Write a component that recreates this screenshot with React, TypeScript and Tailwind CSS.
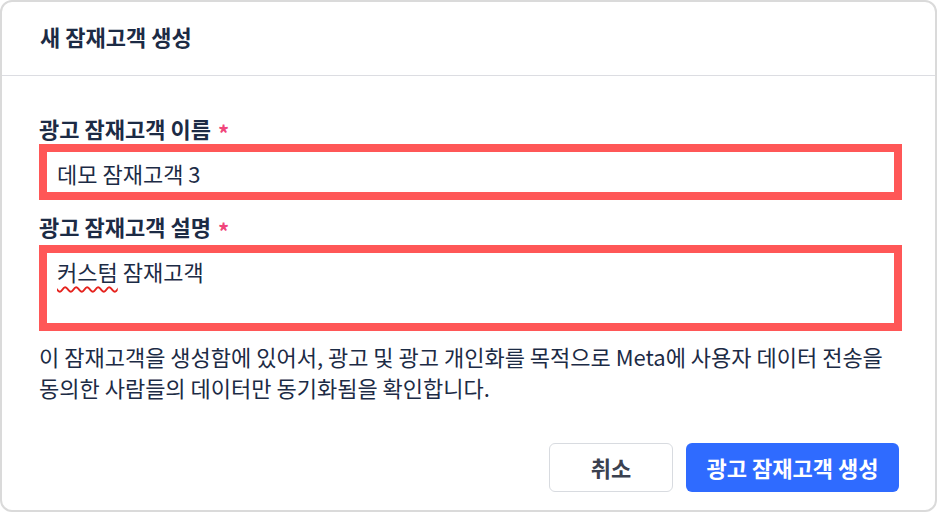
export default function App() {
  return (
    <div className="w-[938px] h-[513px] bg-white font-['Noto_Sans_CJK_KR','Noto_Sans',sans-serif] text-[#1c2b45]">
      <div className="h-[512px] w-[937px] border-2 border-[#dadada] rounded-[12px] flex flex-col">
        {/* header */}
        <div className="h-[74px] shrink-0 flex items-center px-[38px] pb-[6px] border-b border-[#dcdde2]">
          <h1 className="text-[22px] font-bold leading-none">새 잠재고객 생성</h1>
        </div>

        {/* body */}
        <div className="flex flex-col pl-[37px] pr-[33px] pt-[39px]">
          <label className="h-[26px] text-[22px] font-bold leading-[26px] flex gap-[7px]">
            광고 잠재고객 이름
            <span className="text-[#f0457a] relative top-[4px]">*</span>
          </label>
          <div className="mt-[3px] h-[56px] border-[8px] border-[#ff5757] flex items-center px-[10px]">
            <span className="text-[22px] leading-none pt-[1px]">데모 잠재고객 3</span>
          </div>

          <label className="mt-[13px] h-[26px] text-[22px] font-bold leading-[26px] flex gap-[7px]">
            광고 잠재고객 설명
            <span className="text-[#f0457a] relative top-[4px]">*</span>
          </label>
          <div className="mt-[6px] h-[86px] border-[8px] border-[#ff5757] px-[10px] pt-[4px]">
            <span className="text-[22px] leading-[28px]">
              <span className="underline decoration-wavy decoration-[#e5221d] decoration-[1.5px] underline-offset-[5px]">커스텀</span> 잠재고객
            </span>
          </div>

          <p className="mt-[10px] text-[22px] leading-[31px]">
            이 잠재고객을 생성함에 있어서, 광고 및 광고 개인화를 목적으로 Meta에 사용자 데이터 전송을
            <br />
            동의한 사람들의 데이터만 동기화됨을 확인합니다.
          </p>

          <div className="mt-[40px] flex justify-end gap-[13px] pr-[3px]">
            <button className="w-[124px] h-[49px] rounded-[6px] border border-[#d8dbe0] bg-white text-[22px] font-bold text-[#3b4150]">
              취소
            </button>
            <button className="w-[213px] h-[49px] rounded-[6px] bg-[#2f6bff] text-[22px] font-bold text-white">
              광고 잠재고객 생성
            </button>
          </div>
        </div>
      </div>
    </div>
  )
}
